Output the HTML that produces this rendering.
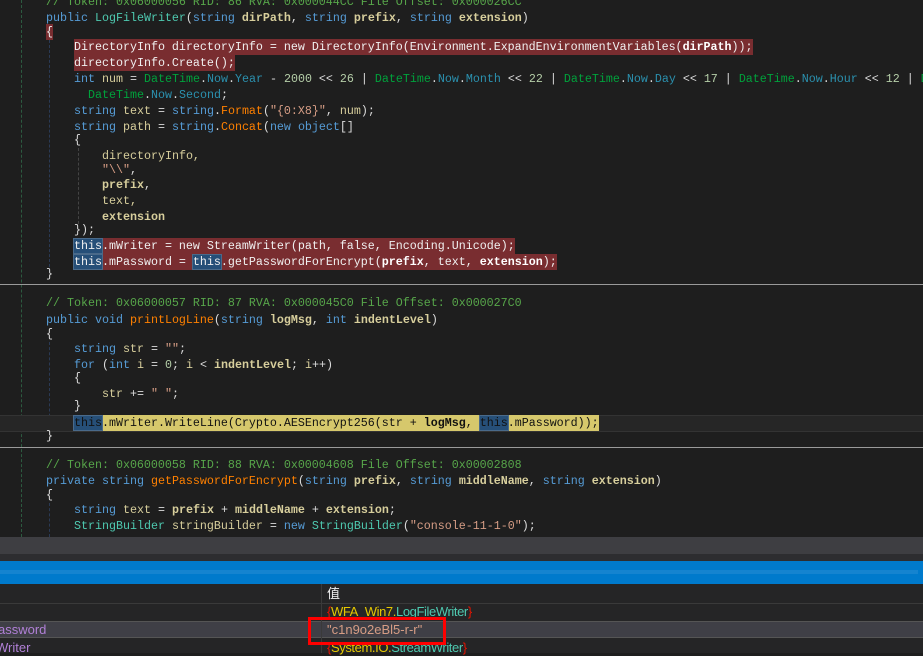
<!DOCTYPE html>
<html><head><meta charset="utf-8"><style>
*{margin:0;padding:0;box-sizing:border-box}
body{width:923px;height:653px;overflow:hidden;background:#1e1e1e;position:relative;font-family:"Liberation Mono","Noto Sans CJK SC",monospace;font-size:11.67px;color:#dcdcdc}
.l{position:absolute;white-space:pre;height:16px;line-height:16px}
.c{color:#57a64a}.k{color:#569cd6}.t{color:#4ec9b0}.p{color:#d7ce9c;font-weight:bold}.v{color:#d7ce9c}
.m{color:#ff8000}.s{color:#d69d85}.n{color:#b5cea8}.d{color:#00a23c}.w{color:#2b91af}
.r{background:#792d30;color:#f0f0f0;padding:1px 0}.r .p{color:#fff}
.th{background:#264f78;outline:1px solid #4a6a8a}
.y{background:#d6c86c;color:#111;padding:1px 0}.y .p{color:#111}
.sep{position:absolute;left:0;width:923px;height:1px;background:#9a9a9a}
</style></head><body>
<div style="position:absolute;left:21px;top:0;height:537px;border-left:1px dashed #2c5a40"></div>
<div style="position:absolute;left:49px;top:40px;height:232px;border-left:1px dashed #2a3a55"></div>
<div style="position:absolute;left:49px;top:342px;height:90px;border-left:1px dashed #2a3a55"></div>
<div style="position:absolute;left:49px;top:503px;height:34px;border-left:1px dashed #2a3a55"></div>
<div style="position:absolute;left:78px;top:148px;height:76px;border-left:1px dashed #444"></div>
<div style="position:absolute;left:0;top:415px;width:923px;height:17px;background:#262626;border-top:1px solid #333;border-bottom:1px solid #333"></div>

<div class="l c" style="left:46px;top:-6px">// Token: 0x06000056 RID: 86 RVA: 0x000044CC File Offset: 0x000026CC</div>
<div class="l" style="left:46px;top:10px"><span class="k">public</span> <span class="t">LogFileWriter</span>(<span class="k">string</span> <span class="p">dirPath</span>, <span class="k">string</span> <span class="p">prefix</span>, <span class="k">string</span> <span class="p">extension</span>)</div>
<div class="l" style="left:46px;top:24px"><span class="r">{</span></div>
<div class="l" style="left:74px;top:39px"><span class="r">DirectoryInfo directoryInfo = new DirectoryInfo(Environment.ExpandEnvironmentVariables(<span class="p">dirPath</span>));</span></div>
<div class="l" style="left:74px;top:55px"><span class="r">directoryInfo.Create();</span></div>
<div class="l" style="left:74px;top:71px"><span class="k">int</span> <span class="v">num</span> = <span class="d">DateTime</span>.<span class="w">Now</span>.<span class="w">Year</span> - <span class="n">2000</span> &lt;&lt; <span class="n">26</span> | <span class="d">DateTime</span>.<span class="w">Now</span>.<span class="w">Month</span> &lt;&lt; <span class="n">22</span> | <span class="d">DateTime</span>.<span class="w">Now</span>.<span class="w">Day</span> &lt;&lt; <span class="n">17</span> | <span class="d">DateTime</span>.<span class="w">Now</span>.<span class="w">Hour</span> &lt;&lt; <span class="n">12</span> | <span class="d">D</span></div>
<div class="l" style="left:88px;top:87px"><span class="d">DateTime</span>.<span class="w">Now</span>.<span class="w">Second</span>;</div>
<div class="l" style="left:74px;top:103px"><span class="k">string</span> <span class="v">text</span> = <span class="k">string</span>.<span class="m">Format</span>(<span class="s">"{0:X8}"</span>, <span class="v">num</span>);</div>
<div class="l" style="left:74px;top:119px"><span class="k">string</span> <span class="v">path</span> = <span class="k">string</span>.<span class="m">Concat</span>(<span class="k">new</span> <span class="k">object</span>[]</div>
<div class="l" style="left:74px;top:132px">{</div>
<div class="l v" style="left:102px;top:148px">directoryInfo,</div>
<div class="l" style="left:102px;top:162px"><span class="s">"\\"</span>,</div>
<div class="l" style="left:102px;top:177px"><span class="p">prefix</span>,</div>
<div class="l v" style="left:102px;top:193px">text,</div>
<div class="l" style="left:102px;top:209px"><span class="p">extension</span></div>
<div class="l" style="left:74px;top:222px">});</div>
<div class="l" style="left:74px;top:238px"><span class="r"><span class="th">this</span>.mWriter = new StreamWriter(path, false, Encoding.Unicode);</span></div>
<div class="l" style="left:74px;top:254px"><span class="r"><span class="th">this</span>.mPassword = <span class="th">this</span>.getPasswordForEncrypt(<span class="p">prefix</span>, text, <span class="p">extension</span>);</span></div>
<div class="l" style="left:46px;top:266px">}</div>
<div class="sep" style="top:284px"></div>

<div class="l c" style="left:46px;top:295px">// Token: 0x06000057 RID: 87 RVA: 0x000045C0 File Offset: 0x000027C0</div>
<div class="l" style="left:46px;top:312px"><span class="k">public</span> <span class="k">void</span> <span class="m">printLogLine</span>(<span class="k">string</span> <span class="p">logMsg</span>, <span class="k">int</span> <span class="p">indentLevel</span>)</div>
<div class="l" style="left:46px;top:326px">{</div>
<div class="l" style="left:74px;top:341px"><span class="k">string</span> <span class="v">str</span> = <span class="s">""</span>;</div>
<div class="l" style="left:74px;top:357px"><span class="k">for</span> (<span class="k">int</span> <span class="v">i</span> = <span class="n">0</span>; <span class="v">i</span> &lt; <span class="p">indentLevel</span>; <span class="v">i</span>++)</div>
<div class="l" style="left:74px;top:370px">{</div>
<div class="l" style="left:102px;top:386px"><span class="v">str</span> += <span class="s">" "</span>;</div>
<div class="l" style="left:74px;top:398px">}</div>
<div class="l" style="left:74px;top:415px"><span class="y"><span class="th" style="color:#111">this</span>.mWriter.WriteLine(Crypto.AESEncrypt256(str + <span class="p">logMsg</span>, <span class="th" style="color:#111">this</span>.mPassword));</span></div>
<div class="l" style="left:46px;top:428px">}</div>
<div class="sep" style="top:447px"></div>

<div class="l c" style="left:46px;top:457px">// Token: 0x06000058 RID: 88 RVA: 0x00004608 File Offset: 0x00002808</div>
<div class="l" style="left:46px;top:473px"><span class="k">private</span> <span class="k">string</span> <span class="m">getPasswordForEncrypt</span>(<span class="k">string</span> <span class="p">prefix</span>, <span class="k">string</span> <span class="p">middleName</span>, <span class="k">string</span> <span class="p">extension</span>)</div>
<div class="l" style="left:46px;top:487px">{</div>
<div class="l" style="left:74px;top:502px"><span class="k">string</span> <span class="v">text</span> = <span class="p">prefix</span> + <span class="p">middleName</span> + <span class="p">extension</span>;</div>
<div class="l" style="left:74px;top:518px"><span class="t">StringBuilder</span> <span class="v">stringBuilder</span> = <span class="k">new</span> <span class="t">StringBuilder</span>(<span class="s">"console-11-1-0"</span>);</div>

<div style="position:absolute;left:0;top:537px;width:923px;height:17px;background:#3e3e42"></div>
<div style="position:absolute;left:0;top:554px;width:923px;height:7px;background:#2d2d30"></div>
<div style="position:absolute;left:0;top:561px;width:923px;height:23px;background:#007acc"></div>
<div style="position:absolute;left:0;top:570px;width:918px;height:4px;background:#1584d0"></div>
<div style="position:absolute;left:0;top:584px;width:923px;height:69px;background:#252526"></div>
<div style="position:absolute;left:0;top:603px;width:923px;height:1px;background:#3a3a3a"></div>
<div style="position:absolute;left:0;top:621px;width:923px;height:17px;background:#3f3f46;border-top:1px solid #555;border-bottom:1px solid #555"></div>
<div style="position:absolute;left:321px;top:584px;width:1px;height:69px;background:#3a3a3a"></div>
<div class="l" style="left:327px;top:585px;font-family:'Noto Sans CJK SC',sans-serif;font-size:13px;color:#f0f0f0">值</div>
<div class="l" style="left:327px;top:604px;font-family:'Liberation Sans',sans-serif;font-size:13px;letter-spacing:-0.4px"><span style="color:#e51400">{</span><span style="color:#e5c800">WFA_Win7.</span><span style="color:#4ec9b0">LogFileWriter</span><span style="color:#e51400">}</span></div>
<div class="l" style="left:327px;top:622px;font-family:'Liberation Sans',sans-serif;font-size:13px;color:#d69d85">"c1n9o2eBl5-r-r"</div>
<div class="l" style="left:327px;top:640px;font-family:'Liberation Sans',sans-serif;font-size:13px;letter-spacing:-0.4px"><span style="color:#e51400">{</span><span style="color:#e5c800">System.IO.</span><span style="color:#4ec9b0">StreamWriter</span><span style="color:#e51400">}</span></div>
<div class="l" style="left:-2px;top:622px;font-family:'Liberation Sans',sans-serif;font-size:13px;color:#b180d7">assword</div>
<div class="l" style="left:-4px;top:640px;font-family:'Liberation Sans',sans-serif;font-size:13px;color:#b180d7">Writer</div>
<div style="position:absolute;left:308px;top:617px;width:138px;height:28px;border:3px solid #ff0000"></div>
</body></html>
